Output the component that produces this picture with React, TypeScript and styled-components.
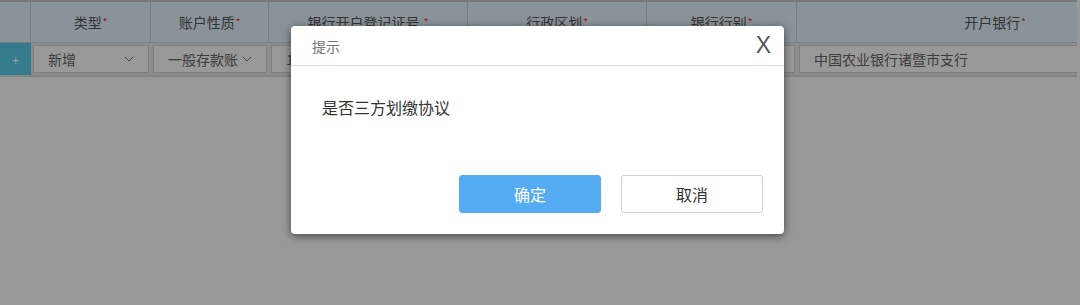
import React from 'react';
import styled, { createGlobalStyle } from 'styled-components';
import { ChevronDown } from 'lucide-react';

const GlobalStyle = createGlobalStyle`
  html, body {
    margin: 0;
    padding: 0;
    background-color: #ffffff;
    font-family: "Microsoft YaHei", "Noto Sans CJK SC", "Noto Sans", sans-serif;
    overflow: hidden;
  }
  * {
    box-sizing: border-box;
  }
`;

const columns = '31px 120px 118px 199px 179px 150px 397px';

const Page = styled.div`
  width: 1080px;
  height: 305px;
  position: relative;
  background-color: #ffffff;
`;

const TableWrap = styled.div`
  width: 1077px;
  overflow: hidden;
  border-top: 2px solid #c8c8c8;
`;

const HeaderRow = styled.div`
  display: grid;
  grid-template-columns: ${columns};
  width: 1194px;
  height: 41px;
  background-color: #e6f5ff;
  border-bottom: 1px solid #ccd3da;
`;

const HeaderCell = styled.div`
  display: flex;
  align-items: center;
  justify-content: center;
  border-right: 1px solid #ccd3da;
  font-size: 14px;
  color: #555;
  white-space: pre;

  sup {
    color: #ff1a1a;
    font-size: 10px;
    margin-left: 1px;
    align-self: flex-start;
    margin-top: 12px;
  }
`;

const BodyRow = styled.div`
  display: grid;
  grid-template-columns: ${columns};
  width: 1194px;
  height: 34px;
  background-color: #ebebeb;
  border-bottom: 2px solid #dcdcdc;
`;

const AddCell = styled.div`
  display: flex;
  align-items: center;
  justify-content: center;
  background-color: #58cdec;
  color: #ffffff;
  font-size: 13px;
`;

const Field = styled.div`
  margin: 2px;
  background-color: #ffffff;
  border: 1px solid #d3d3d3;
  display: flex;
  align-items: center;
  justify-content: space-between;
  padding: 0 11px 0 14px;
  font-size: 14px;
  color: #666;
  white-space: nowrap;
  overflow: hidden;

  span {
    overflow: hidden;
  }

  svg {
    flex-shrink: 0;
  }
`;

const Overlay = styled.div`
  position: absolute;
  inset: 0;
  background-color: rgba(0, 0, 0, 0.4);
  display: flex;
  justify-content: center;
  align-items: flex-start;
  padding-top: 26px;
  padding-right: 5px;
`;

const Modal = styled.div`
  width: 493px;
  background-color: #ffffff;
  border-radius: 4px;
  box-shadow: 0 2px 8px rgba(0, 0, 0, 0.55);
  display: flex;
  flex-direction: column;
`;

const ModalHeader = styled.div`
  height: 40px;
  display: flex;
  align-items: center;
  justify-content: space-between;
  padding: 0 13px 0 21px;
  border-bottom: 1px solid #dcdcdc;
`;

const Title = styled.span`
  font-size: 14px;
  color: #777;
`;

const Close = styled.span`
  font-family: "Liberation Sans", Arial, sans-serif;
  font-size: 23px;
  color: #555;
  line-height: 1;
  cursor: pointer;
`;

const ModalBody = styled.div`
  height: 109px;
  padding: 29px 31px 0;
  font-size: 16px;
  color: #333;
`;

const Footer = styled.div`
  display: flex;
  justify-content: flex-end;
  gap: 20px;
  padding: 0 21px 21px;
`;

const Button = styled.div<{ $primary?: boolean }>`
  width: 142px;
  height: 38px;
  display: flex;
  align-items: center;
  justify-content: center;
  border-radius: 3px;
  font-size: 16px;
  cursor: pointer;
  background-color: ${(p) => (p.$primary ? '#55acf3' : '#ffffff')};
  color: ${(p) => (p.$primary ? '#ffffff' : '#333')};
  border: 1px solid ${(p) => (p.$primary ? '#55acf3' : '#cfcfcf')};
`;

const headers = ['类型', '账户性质', '银行开户登记证号 ', '行政区划', '银行行别', '开户银行'];

const App: React.FC = () => {
  return (
    <Page>
      <GlobalStyle />
      <TableWrap>
        <HeaderRow>
          <HeaderCell />
          {headers.map((h) => (
            <HeaderCell key={h}>
              {h}
              <sup>*</sup>
            </HeaderCell>
          ))}
        </HeaderRow>
        <BodyRow>
          <AddCell>+</AddCell>
          <Field>
            <span>新增</span>
            <ChevronDown size={16} strokeWidth={1.4} color="#666" />
          </Field>
          <Field>
            <span>一般存款账</span>
            <ChevronDown size={16} strokeWidth={1.4} color="#666" />
          </Field>
          <Field>1</Field>
          <Field />
          <Field />
          <Field>中国农业银行诸暨市支行</Field>
        </BodyRow>
      </TableWrap>
      <Overlay>
        <Modal>
          <ModalHeader>
            <Title>提示</Title>
            <Close>X</Close>
          </ModalHeader>
          <ModalBody>是否三方划缴协议</ModalBody>
          <Footer>
            <Button $primary>确定</Button>
            <Button>取消</Button>
          </Footer>
        </Modal>
      </Overlay>
    </Page>
  );
};

export default App;
